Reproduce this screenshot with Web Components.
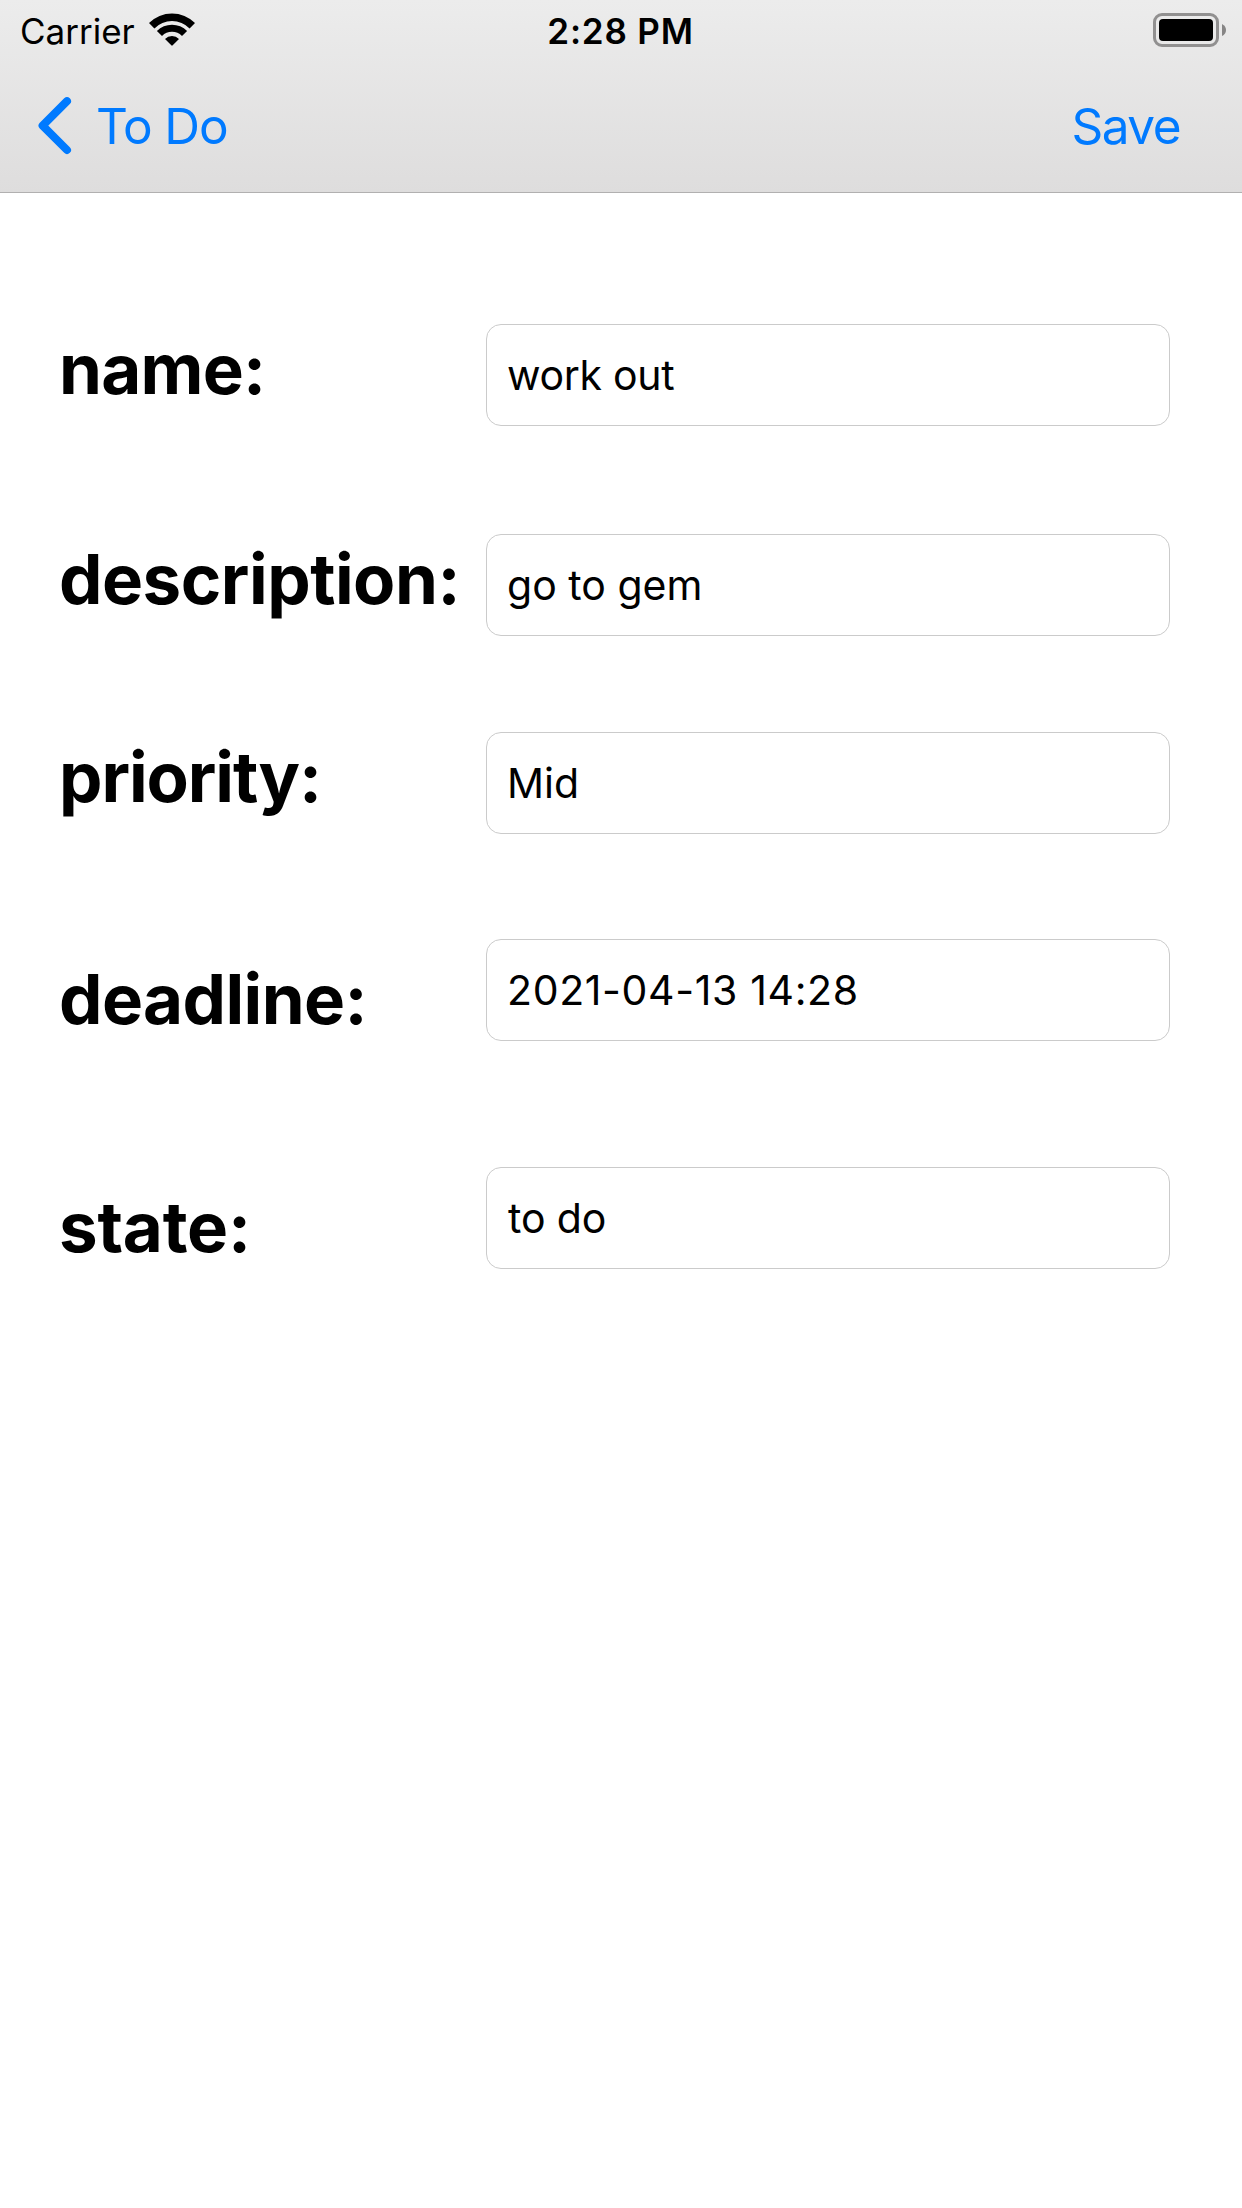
<!DOCTYPE html>
<html lang="en">
<head>
<meta charset="utf-8">
<title>To Do</title>
<style>
  html, body { margin: 0; background: #fff; }
  body { font-family: Inter, "Liberation Sans", sans-serif; color: #000; }
</style>
</head>
<body>
<todo-screen></todo-screen>
<script>
  const define = (name, html) => {
    const template = document.createElement('template');
    template.innerHTML = html;
    customElements.define(name, class extends HTMLElement {
      constructor() {
        super();
        this.attachShadow({ mode: 'open' }).append(template.content.cloneNode(true));
      }
    });
  };

  define('wifi-icon', `
    <style>:host { display: block; width: 46px; height: 34px; } svg { display: block; }</style>
    <svg width="46" height="34" viewBox="0 0 46 34">
      <path d="M0 10A32.5 32.5 0 0 1 46 10L40.6 15.4A24.9 24.9 0 0 0 5.4 15.4Z"/>
      <path d="M7.9 17.9A21.4 21.4 0 0 1 38.1 17.9L33 23A14.1 14.1 0 0 0 13 23Z"/>
      <path d="M16 26A9.9 9.9 0 0 1 30 26L23.7 32.3Q23 33 22.3 32.3Z"/>
    </svg>`);

  define('battery-icon', `
    <style>:host { display: block; width: 73px; height: 34px; } svg { display: block; }</style>
    <svg width="73" height="34" viewBox="0 0 73 34">
      <rect x="1.5" y="1.5" width="63" height="31" rx="7.5" fill="none" stroke="#919090" stroke-width="3"/>
      <rect x="6" y="6" width="54" height="22" rx="4"/>
      <path d="M69 11Q73 13 73 17T69 23Z" fill="#868585"/>
    </svg>`);

  define('status-bar', `
    <style>
      :host { display: grid; grid-template-columns: 527.3px 1fr auto; align-items: center;
              height: 62px; padding: 0 16px 0 20px; font-size: 35px; line-height: 42px; white-space: nowrap; }
      .left { display: flex; align-items: center; gap: 14.5px; }
      .time { font-weight: 600; letter-spacing: .8px; }
      wifi-icon { margin-bottom: 3px; }
      battery-icon { margin-bottom: 2px; }
    </style>
    <div class="left"><span>Carrier</span><wifi-icon></wifi-icon></div>
    <span class="time">2:28 PM</span>
    <battery-icon></battery-icon>`);

  define('nav-bar', `
    <style>
      :host { display: flex; align-items: center; justify-content: space-between; height: 128px;
              padding: 0 62px 0 36.4px; box-sizing: border-box; color: #007aff;
              font-size: 49.5px; line-height: 60px; white-space: nowrap; }
      .back { display: flex; align-items: center; gap: 22.6px; letter-spacing: -1.1px; }
      .save { letter-spacing: -1.5px; }
      svg { display: block; margin-bottom: 2px; }
    </style>
    <div class="back">
      <svg width="37" height="60" viewBox="0 0 37 60">
        <path d="M31 6.2L6.6 30.6L31 55" fill="none" stroke="#007aff" stroke-width="8" stroke-linecap="round" stroke-linejoin="round"/>
      </svg>
      <slot name="back"></slot>
    </div>
    <div class="save"><slot name="action"></slot></div>`);

  define('form-row', `
    <style>
      :host { display: grid; grid-template-columns: 427px 684px; height: 102px; white-space: nowrap; }
      .label { padding-top: var(--drop, 0px); font-size: 69px; font-weight: 700; line-height: 90px;
               letter-spacing: var(--label-track, 0px); }
      .field { box-sizing: border-box; height: 102px; padding-left: var(--inset, 20px); border: 1px solid #cbcbcb;
               border-radius: 15px; background: #fff; font-size: 41px; line-height: 100px;
               letter-spacing: var(--field-track, 0px); }
    </style>
    <div class="label"><slot name="label"></slot></div>
    <div class="field"><slot></slot></div>`);

  define('todo-screen', `
    <style>
      :host { display: flex; flex-direction: column; min-height: 2208px; background: #fff; }
      header { background: linear-gradient(#ececec, #dedddd); border-bottom: 1px solid #b1b0b0; height: 192px; }
      main { display: flex; flex-direction: column; padding: 131px 72px 0 59px; }
    </style>
    <header>
      <status-bar></status-bar>
      <nav-bar><span slot="back">To Do</span><span slot="action">Save</span></nav-bar>
    </header>
    <main>
      <form-row style="--label-track:-.77px;--field-track:-.3px"><span slot="label">name:</span>work out</form-row>
      <form-row style="margin-top:108px;--label-track:-.5px;--field-track:0px"><span slot="label">description:</span>go to gem</form-row>
      <form-row style="margin-top:96px;--label-track:-1.09px;--field-track:0px"><span slot="label">priority:</span>Mid</form-row>
      <form-row style="margin-top:105px;--drop:15px;--label-track:-.6px;--field-track:.64px"><span slot="label">deadline:</span>2021-04-13 14:28</form-row>
      <form-row style="margin-top:126px;--drop:15px;--label-track:-.2px;--inset:21px;--field-track:-.13px"><span slot="label">state:</span>to do</form-row>
    </main>`);
</script>
</body>
</html>
